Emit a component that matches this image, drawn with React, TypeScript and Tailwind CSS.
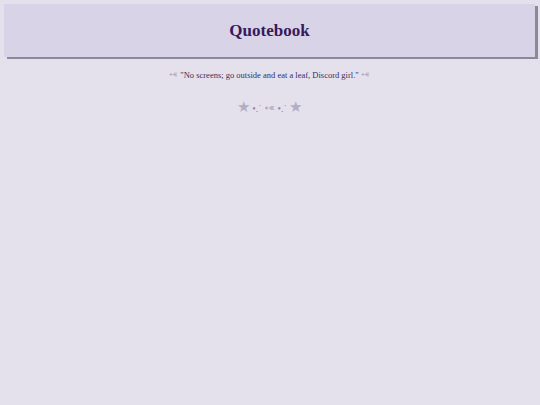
export default function App() {
  return (
    <div className="min-h-[405px] w-full bg-[#e4e1ec] py-1 pl-1 pr-[5px] font-['Liberation_Serif',serif]">
      <header className="flex h-[53px] items-center justify-center bg-[#d9d3e7] shadow-[3px_2px_0_#8d8899]">
        <h1 className="text-[17px] font-bold text-[#361a5c]">Quotebook</h1>
      </header>
      <p className="mt-[12px] text-center text-[8.5px] text-[#3b2d5c]">
        <span className="inline-block -scale-x-100 text-[11px] leading-none text-[#aaa4bd]">➳</span> "No screens; go outside and eat a leaf, Discord girl." <span className="inline-block -scale-x-100 text-[11px] leading-none text-[#aaa4bd]">➳</span>
      </p>
      <div className="mt-[14px] text-center text-[10px] text-[#8f89a3]">
        <span className="text-[15px] text-[#b3aec3]">★</span> •.˙ <span className="inline-block -scale-x-100 text-[13px] leading-none text-[#aaa4bd]">➳</span> •.˙ <span className="text-[15px] text-[#b3aec3]">★</span>
      </div>
    </div>
  );
}
